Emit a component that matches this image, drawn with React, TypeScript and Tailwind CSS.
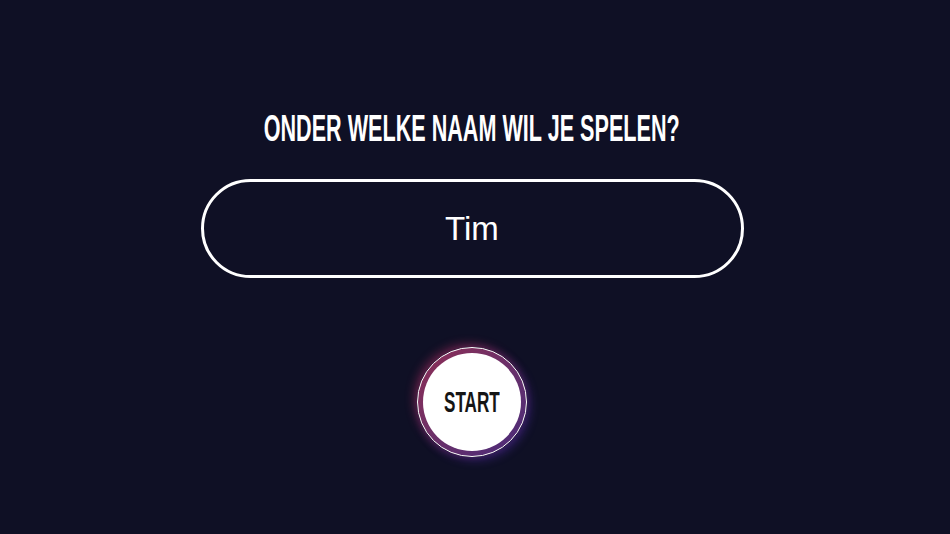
import { useState } from 'react';

const App = () => {
  const [name, setName] = useState('Tim');

  return (
    <div className="min-h-screen w-full bg-[#0f1025]">
      <div className="w-[944px] flex flex-col items-center pt-[111px]">
        {/* Vraag */}
        <h1 className="h-[36px] leading-[36px] text-[36px] font-bold text-white whitespace-nowrap font-['Liberation_Sans',Arial,sans-serif] scale-x-[0.6]">
          ONDER WELKE NAAM WIL JE SPELEN?
        </h1>

        {/* Naam invoer */}
        <input
          value={name}
          onChange={(e) => setName(e.target.value)}
          className="mt-[32px] h-[99px] w-[543px] rounded-full border-[3px] border-white bg-transparent text-center text-[33px] text-white outline-none font-['Liberation_Sans',Arial,sans-serif]"
        />

        {/* Start knop */}
        <button className="mt-[69px] h-[110px] w-[110px] rounded-full border-[1.5px] border-white bg-linear-to-br from-[#8e2c54] to-[#48297a] p-[5px] shadow-[-3px_-3px_10px_rgba(190,50,100,0.45),3px_3px_10px_rgba(90,50,190,0.45)]">
          <span className="flex h-full w-full items-center justify-center rounded-full bg-white">
            <span className="text-[30px] leading-none font-bold text-[#151515] font-['Liberation_Sans',Arial,sans-serif] scale-x-[0.57] inline-block">
              START
            </span>
          </span>
        </button>
      </div>
    </div>
  );
};

export default App;
